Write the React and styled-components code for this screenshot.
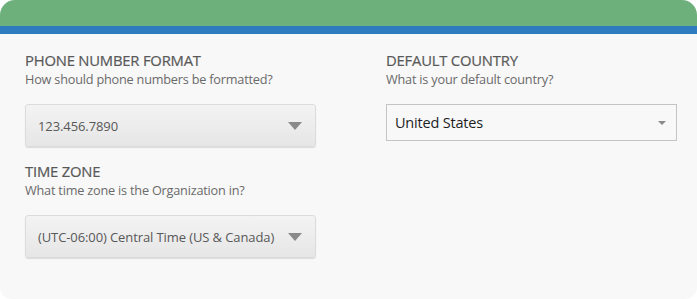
import React from "react";
import styled, { createGlobalStyle } from "styled-components";

const Global = createGlobalStyle`
  html, body { margin: 0; padding: 0; background: #ffffff; }
  body { font-family: "Open Sans", "Noto Sans", sans-serif; }
`;

const Card = styled.div`
  width: 697px;
  height: 299px;
  box-sizing: border-box;
  background: #f8f8f8;
  border-radius: 15px 15px 12px 12px;
  overflow: hidden;
  display: flex;
  flex-direction: column;
`;

const Header = styled.div`
  height: 26px;
  background: #6db07b;
  border-bottom: 8px solid #2f7bbf;
`;

const Body = styled.div`
  display: grid;
  grid-template-columns: 291px 291px;
  column-gap: 70px;
  padding: 16px 20px 0 25px;
`;

const Column = styled.div`
  display: flex;
  flex-direction: column;
`;

const Field = styled.div`
  display: flex;
  flex-direction: column;
  margin-bottom: 14px;
`;

const Label = styled.div`
  font-size: 14.8px;
  font-weight: 500;
  line-height: 20px;
  color: #595959;
  text-transform: uppercase;
  letter-spacing: -0.2px;
  -webkit-text-stroke: 0.2px #595959;
`;

const Hint = styled.div`
  font-size: 12.7px;
  line-height: 18px;
  color: #6a6a6a;
  margin-bottom: 16px;
  letter-spacing: -0.2px;
`;

const FancySelect = styled.div`
  height: 43px;
  box-sizing: border-box;
  border: 1px solid #dcdcdc;
  border-radius: 3px;
  background: linear-gradient(#f3f3f3, #e6e6e6);
  box-shadow: 0 1px 1px rgba(0, 0, 0, 0.12);
  display: flex;
  align-items: center;
  justify-content: space-between;
  padding: 0 13px 0 12px;
  font-size: 13px;
  color: #585858;
  letter-spacing: -0.1px;
`;

const PlainSelect = styled.div`
  height: 37px;
  box-sizing: border-box;
  border: 1px solid #c4c4c4;
  background: #f8f8f8;
  display: flex;
  align-items: center;
  justify-content: space-between;
  padding: 0 10px 0 8px;
  font-size: 14.5px;
  color: #1e1e1e;
  letter-spacing: -0.2px;
`;

const Caret = styled.span`
  width: 0;
  height: 0;
  border-left: ${(p) => p.$size}px solid transparent;
  border-right: ${(p) => p.$size}px solid transparent;
  border-top: ${(p) => Math.round(p.$size * 1.1)}px solid #8a8a8a;
`;

export default function App() {
  return (
    <>
      <Global />
      <Card>
        <Header />
        <Body>
          <Column>
            <Field>
              <Label>Phone Number Format</Label>
              <Hint>How should phone numbers be formatted?</Hint>
              <FancySelect>
                <span>123.456.7890</span>
                <Caret $size={7} />
              </FancySelect>
            </Field>
            <Field>
              <Label>Time Zone</Label>
              <Hint>What time zone is the Organization in?</Hint>
              <FancySelect>
                <span>(UTC-06:00) Central Time (US &amp; Canada)</span>
                <Caret $size={7} />
              </FancySelect>
            </Field>
          </Column>
          <Column>
            <Field>
              <Label>Default Country</Label>
              <Hint>What is your default country?</Hint>
              <PlainSelect>
                <span>United States</span>
                <Caret $size={4} />
              </PlainSelect>
            </Field>
          </Column>
        </Body>
      </Card>
    </>
  );
}
